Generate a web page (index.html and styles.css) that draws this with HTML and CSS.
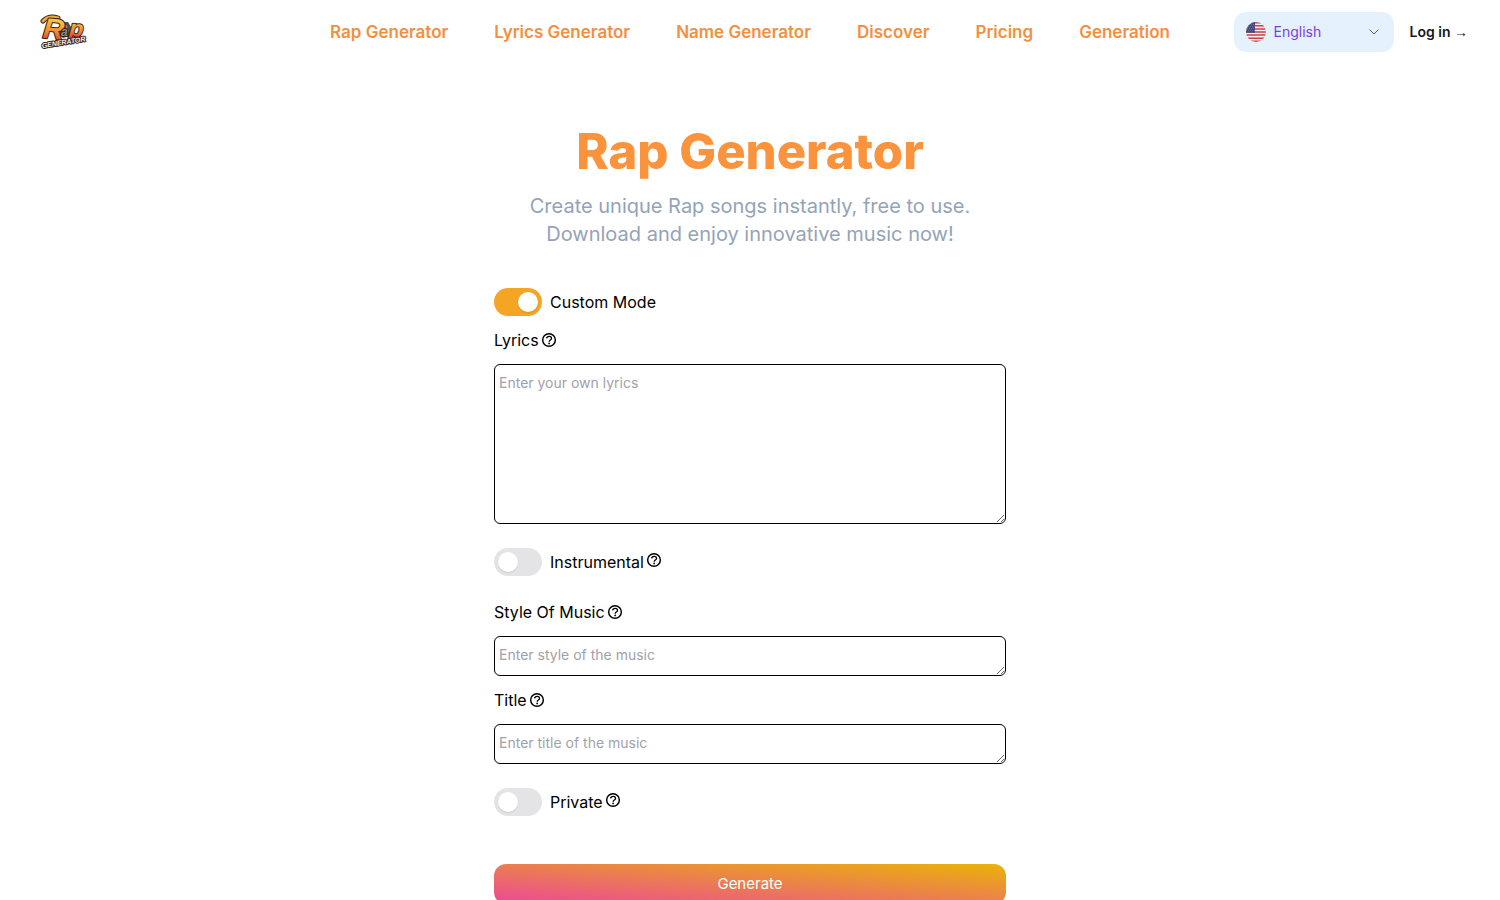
FILE: index.html
```html
<!DOCTYPE html>
<html lang="en">
<head>
<meta charset="utf-8">
<meta name="viewport" content="width=device-width, initial-scale=1">
<title>Rap Generator</title>
<link rel="stylesheet" href="styles.css">
</head>
<body>
<svg class="sprite" aria-hidden="true">
  <symbol id="help" viewBox="0 0 24 24">
    <g fill="none" stroke="currentColor" stroke-width="2.200">
      <circle cx="12" cy="12" r="9.500"/>
      <path stroke-width="2" d="M8.300 9.700C8.700 7.500 10.200 6.600 12.100 6.600c2.200 0 3.700 1.200 3.700 3 0 2.400-3.500 2.600-3.500 5"/>
    </g>
    <circle cx="12.200" cy="17.200" r="1.300" fill="currentColor"/>
  </symbol>
</svg>
<header class="header">
  <div class="header-start">
    <a class="logo" href="#" aria-label="Rap Generator home">
      <svg viewBox="0 0 48 36" width="48" height="36">
        <defs>
          <linearGradient id="gold" x1="0" y1="0" x2="0" y2="1">
            <stop offset="0.200" stop-color="#f8c93c"/>
            <stop offset="0.600" stop-color="#ee8a35"/>
            <stop offset="0.900" stop-color="#d63f2c"/>
          </linearGradient>
        </defs>
        <path fill="none" stroke="#33241f" stroke-width="5" stroke-linecap="round" d="M3 7C7 3 12 2 18 4"/>
        <path fill="none" stroke="#eda63a" stroke-width="3" stroke-linecap="round" d="M3 7C7 3 12 2 18 4"/>
        <path fill="#514b48" d="M23 8l5 0 3 5-1 9-7 2-4-3 1-8z"/>
        <path fill="none" stroke="#9a8f88" d="M23 11l4 1-1 4 3 1M21 18l4 2 3-2"/>
        <g transform="rotate(6 24 18)" class="logo-type">
          <text x="3" y="26" font-size="29" fill="url(#gold)">R</text>
          <text x="29" y="21" font-size="23" fill="url(#gold)">p</text>
        </g>
        <text class="logo-type" x="21" y="22" font-size="12" fill="#8f8984">a</text>
        <g transform="rotate(-9 3 33)" class="logo-type">
          <text x="2" y="34" font-size="7" fill="#fff3ea">GENERATOR</text>
        </g>
      </svg>
    </a>
  </div>
  <nav class="nav">
    <a href="#">Rap Generator</a>
    <a href="#">Lyrics Generator</a>
    <a href="#">Name Generator</a>
    <a href="#">Discover</a>
    <a href="#">Pricing</a>
    <a href="#">Generation</a>
  </nav>
  <div class="header-end">
    <div class="language">
      <select class="language-select" aria-label="Language">
        <option>English</option>
      </select>
      <svg class="language-flag" viewBox="0 0 20 20" width="20" height="20" aria-hidden="true">
        <clipPath id="round"><circle cx="10" cy="10" r="10"/></clipPath>
        <g clip-path="url(#round)">
          <path fill="#f3eeee" d="M0 0h20v20H0z"/>
          <path stroke="#c8414b" stroke-width="1.540" d="M0 .77h20M0 3.850h20M0 6.920h20M0 10h20M0 13.080h20M0 16.150h20M0 19.230h20"/>
          <path fill="#46467f" d="M0 0h9v10.770H0z"/>
          <path stroke="#8585b0" stroke-width=".8" stroke-dasharray=".8 1.200" d="M1 2.500h8M2 4.500h7M1 6.500h8M2 8.500h7"/>
        </g>
      </svg>
      <svg class="language-chevron" viewBox="0 0 12 12" width="12" height="12" aria-hidden="true">
        <path fill="none" stroke="#5d4fb4" d="M1.500 3.500L6 8l4.500-4.500"/>
      </svg>
    </div>
    <a class="login" href="#">Log in <span class="login-arrow" aria-hidden="true">→</span></a>
  </div>
</header>
<main class="main">
  <h1 class="title">Rap Generator</h1>
  <p class="subtitle">Create unique Rap songs instantly, free to use. Download and enjoy innovative music now!</p>
  <form class="form">
    <div class="switch-row">
      <input class="switch" type="checkbox" id="custom" checked>
      <label for="custom">Custom Mode</label>
    </div>
    <div class="label-row">
      <label for="lyrics">Lyrics</label>
      <svg class="help"><use href="#help"/></svg>
    </div>
    <textarea class="field field-tall" id="lyrics" placeholder="Enter your own lyrics"></textarea>
    <div class="switch-row switch-spaced">
      <input class="switch" type="checkbox" id="instrumental">
      <label for="instrumental">Instrumental</label>
      <svg class="help help-raised"><use href="#help"/></svg>
    </div>
    <div class="label-row">
      <label for="style">Style Of Music</label>
      <svg class="help"><use href="#help"/></svg>
    </div>
    <textarea class="field" id="style" placeholder="Enter style of the music"></textarea>
    <div class="label-row">
      <label for="title">Title</label>
      <svg class="help"><use href="#help"/></svg>
    </div>
    <textarea class="field" id="title" placeholder="Enter title of the music"></textarea>
    <div class="switch-row switch-spaced">
      <input class="switch" type="checkbox" id="private">
      <label for="private">Private</label>
      <svg class="help help-raised"><use href="#help"/></svg>
    </div>
    <button class="generate" type="button">Generate</button>
  </form>
</main>
</body>
</html>
```

FILE: styles.css
```css
* {
  box-sizing: border-box;
}

html {
  scrollbar-width: none;
}

body {
  margin: 0;
  background: #fff;
  color: #11181c;
  font-family: Inter, "Liberation Sans", sans-serif;
  font-size: 16px;
  line-height: 24px;
}

.sprite {
  position: absolute;
  width: 0;
  height: 0;
}

a {
  text-decoration: none;
}

.header {
  display: flex;
  align-items: center;
  padding: 12px 32px;
}

.header-start,
.header-end {
  display: flex;
  flex: 1;
  align-items: center;
}

.header-end {
  justify-content: flex-end;
  gap: 16px;
}

.logo {
  display: flex;
  padding-left: 8px;
}

.logo-type {
  font-family: "Liberation Sans", sans-serif;
  font-weight: 700;
  font-style: italic;
  paint-order: stroke;
  stroke: #33201b;
  stroke-width: 2px;
  stroke-linejoin: round;
}

.nav {
  display: flex;
  gap: 46px;
}

.nav a {
  color: #f58f40;
  font-size: 17px;
  font-weight: 600;
}

.language {
  position: relative;
  width: 160px;
}

.language-select {
  display: block;
  appearance: none;
  width: 100%;
  height: 40px;
  padding: 0 36px 0 40px;
  border: 0;
  border-radius: 12px;
  background: #e6f1fe;
  color: #7a3fe0;
  font: inherit;
  font-size: 14px;
}

.language-flag,
.language-chevron {
  position: absolute;
  pointer-events: none;
}

.language-flag {
  top: 10px;
  left: 12px;
}

.language-chevron {
  top: 14px;
  right: 14px;
}

.login {
  color: #11181c;
  font-size: 14px;
  font-weight: 600;
}

.login-arrow {
  font-family: "Liberation Sans", sans-serif;
  font-weight: 400;
}

.main {
  display: flex;
  flex-direction: column;
  align-items: center;
  padding: 52px 24px;
}

.title {
  margin: 0;
  color: #fb923c;
  font-size: 49px;
  font-weight: 800;
  line-height: 72px;
}

.subtitle {
  max-width: 512px;
  margin: 4px 0 40px;
  color: #94a3b8;
  font-size: 20px;
  line-height: 28px;
  text-align: center;
}

.form {
  display: flex;
  flex-direction: column;
  width: 100%;
  max-width: 512px;
  color: #000;
}

.switch-row {
  display: flex;
  align-items: center;
  height: 28px;
}

.switch-row label {
  margin-left: 8px;
}

.switch-spaced {
  margin: 24px 0 12px;
}

.switch {
  appearance: none;
  display: flex;
  width: 48px;
  height: 28px;
  margin: 0;
  padding: 4px;
  border-radius: 14px;
  background: #e4e4e7;
}

.switch::before {
  content: "";
  width: 20px;
  height: 20px;
  border-radius: 10px;
  background: #fff;
  box-shadow: 0 1px 2px rgb(0 0 0 / 10%);
}

.switch:checked {
  justify-content: flex-end;
  background: #f5a524;
}

.label-row {
  display: flex;
  align-items: center;
  gap: 2px;
  padding: 12px 0;
}

.help {
  width: 16px;
  height: 16px;
}

.help-raised {
  margin: 0 0 4px 2px;
}

.field {
  display: block;
  width: 100%;
  height: 40px;
  padding: 8px 4px;
  border: 1px solid #000;
  border-radius: 6px;
  background: #fff;
  color: #11181c;
  font: inherit;
  font-size: 14px;
  line-height: 20px;
  resize: vertical;
}

.field-tall {
  height: 160px;
}

.field::placeholder {
  color: #a1a1aa;
}

.generate {
  height: 40px;
  margin-top: 36px;
  border: 0;
  border-radius: 12px;
  background: linear-gradient(to top right, #ec4899, #eab308);
  color: #fff;
  font: inherit;
  font-size: 15px;
}
```
